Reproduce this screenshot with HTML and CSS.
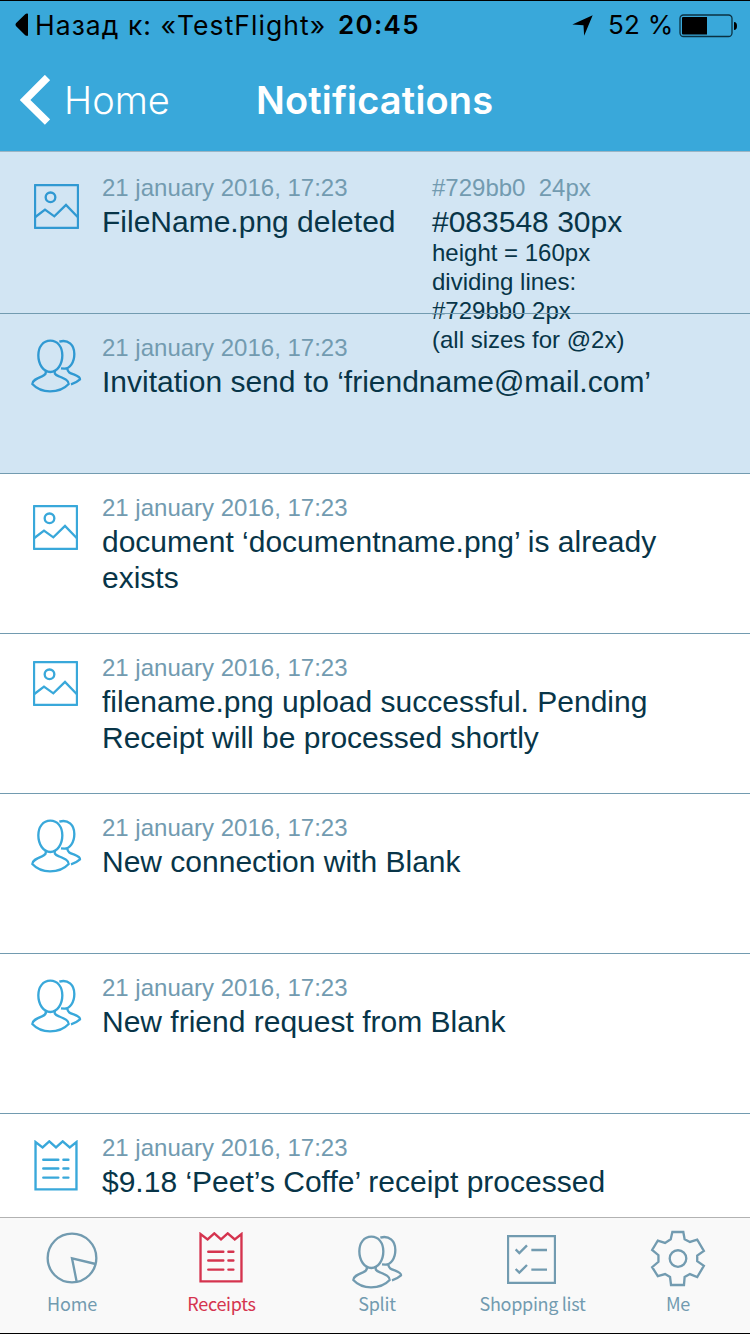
FILE: index.html
```html
<!DOCTYPE html>
<html lang="en">
<head>
<meta charset="utf-8">
<title>Notifications</title>
<link rel="stylesheet" href="styles.css">
</head>
<body>
<svg class="defs" width="0" height="0">
  <symbol id="image" viewBox="42 42 135 135"><rect x="45" y="45" width="129" height="129" rx="1"/><circle cx="91.500" cy="82" r="14.500"/><path d="M46 141L75 119L103 139L138 105L173 141"/></symbol>
  <symbol id="people" viewBox="30 40 156 165"><path d="M91 48C69 48 55 67 55 92C55 119 70 142 91 142C112 142 127 119 127 92C127 67 113 48 91 48Z"/><path d="M77 138Q81 149 66 155C48 162 37 167 37 178C48 190 67 200 90 200C113 200 135 190 146 178C146 167 136 163 117 155C102 149 103 145 105 138"/><path d="M118 51C144 43 163 61 163 88C163 114 149 132 133 132L123 131M142 132C143 144 151 146 163 150C173 154 181 158 180 164Q169 174 153 179"/></symbol>
  <symbol id="receipt" viewBox="42 45 130 152"><path d="M46 51L46 192L168 192L168 51L148 67L127 49L107 67L87 49L67 67Z"/><path stroke-linecap="round" d="M69 104H114M129 104H144M69 130H114M129 130H144M69 157H114M129 157H144"/></symbol>
</svg>
<div class="screen">
  <header class="header">
    <div class="status">
      <svg class="back-tri" viewBox="0 0 14 26"><path d="M14 1V24.500Q12.500 25 11 24L1 14Q0 12.500 1 11L11 1.500Q12.500 0 14 1Z"/></svg>
      <span class="status-back">Назад к: «TestFlight»</span>
      <span class="status-time">20:45</span>
      <svg class="location" viewBox="0 0 64 64"><path d="M1 29L63 1L37 63L35 31Z"/></svg>
      <span class="status-pct">52 %</span>
      <svg class="battery" viewBox="0 0 58 24"><rect x="1" y="1" width="52" height="21.500" rx="3.500" class="shell"/><path d="M4 3H28V20.500H4Q3 20.500 3 19.500V4Q3 3 4 3ZM55 8Q58 8 58 12T55 16Z"/></svg>
    </div>
    <div class="nav">
      <svg class="chevron" viewBox="0 0 30 50"><path d="M27.500 2.500L5 25L27.500 47"/></svg>
      <span class="nav-back">Home</span>
      <h1 class="nav-title">Notifications</h1>
    </div>
  </header>
  <main class="list">
    <article class="row unread first">
      <div class="icon"><svg class="image"><use href="#image"/></svg></div>
      <div class="text"><time>21 january 2016, 17:23</time><p>FileName.png deleted</p></div>
      <div class="note"><div class="note-date">#729bb0&nbsp; 24px</div><div class="note-title">#083548 30px</div><div>height = 160px</div><div>dividing lines:</div><div>#729bb0 2px</div><div>(all sizes for @2x)</div></div>
    </article>
    <article class="row unread">
      <div class="icon"><svg class="people"><use href="#people"/></svg></div>
      <div class="text"><time>21 january 2016, 17:23</time><p>Invitation send to ‘friendname@mail.com’</p></div>
    </article>
    <article class="row">
      <div class="icon"><svg class="image low"><use href="#image"/></svg></div>
      <div class="text"><time>21 january 2016, 17:23</time><p>document ‘documentname.png’ is already<br>exists</p></div>
    </article>
    <article class="row">
      <div class="icon"><svg class="image high"><use href="#image"/></svg></div>
      <div class="text"><time>21 january 2016, 17:23</time><p>filename.png upload successful. Pending<br>Receipt will be processed shortly</p></div>
    </article>
    <article class="row">
      <div class="icon"><svg class="people"><use href="#people"/></svg></div>
      <div class="text"><time>21 january 2016, 17:23</time><p>New connection with Blank</p></div>
    </article>
    <article class="row">
      <div class="icon"><svg class="people"><use href="#people"/></svg></div>
      <div class="text"><time>21 january 2016, 17:23</time><p>New friend request from Blank</p></div>
    </article>
    <article class="row">
      <div class="icon"><svg class="receipt"><use href="#receipt"/></svg></div>
      <div class="text"><time>21 january 2016, 17:23</time><p>$9.18 ‘Peet’s Coffe’ receipt processed</p></div>
    </article>
  </main>
  <nav class="tabs">
    <a class="tab"><svg viewBox="0 0 156 156" class="pie"><circle cx="78" cy="78" r="73"/><path d="M149 96L78 79L92 149"/></svg><span>Home</span></a>
    <a class="tab active"><svg class="receipt"><use href="#receipt"/></svg><span>Receipts</span></a>
    <a class="tab"><svg class="people"><use href="#people"/></svg><span>Split</span></a>
    <a class="tab shopping"><svg class="checklist" viewBox="0 0 147 147"><path d="M3 3H144V144H3ZM26 43L37 54L60 31M73 45H120M26 102L37 113L60 90M73 104H120"/></svg><span>Shopping list</span></a>
    <a class="tab"><svg class="gear" viewBox="150 76 168 172"><path d="M217 82H250L254 104L270 112L292 105L312 139L292 153V170L312 184L292 218L270 209L254 218L252 242H213L210 218L195 209L173 215L156 188L175 172V152L156 136L173 108L195 115L212 104Z"/><circle cx="234" cy="162" r="25"/></svg><span>Me</span></a>
  </nav>
</div>
</body>
</html>
```
FILE: styles.css
```css
* { box-sizing: border-box; }
body { margin: 0; background: #fff; font-family: "Liberation Sans", Arial, sans-serif; }
svg { display: block; fill: none; stroke: currentColor; stroke-width: 7; flex: none; }
.defs { position: absolute; }
.screen { width: 750px; height: 1334px; display: flex; flex-direction: column; overflow: hidden; border-bottom: 1px solid #000; }
.header { height: 152px; flex: none; background: #39a8da; border-top: 1px solid #000; border-bottom: 1px solid #9bb5c4; font-family: Inter, sans-serif; }
.status { height: 50px; display: flex; align-items: flex-start; padding: 0 13px 0 15px; color: #000; font-size: 26px; line-height: 48px; white-space: nowrap; }
.status svg { fill: #000; stroke: none; }
.back-tri { width: 13px; height: 26px; margin-top: 11px; }
.status-back { width: 310px; padding-left: 7px; letter-spacing: 1.05px; font-size: 26.5px; }
.status-time { font-weight: 600; letter-spacing: 1.3px; }
.location { width: 21px; height: 21px; margin: 14px 15px 0 auto; }
.status-pct { width: 71px; letter-spacing: .3px; }
.battery { width: 58px; height: 24px; margin-top: 13px; }
.battery .shell { fill: none; stroke: #0b3142; stroke-width: 1.300; }
.nav { height: 100px; display: grid; grid-template-columns: 64px 192px 1fr; color: #fff; line-height: 98px; }
.chevron { width: 30px; height: 50px; margin: 24px 0 0 19.500px; stroke-width: 7.500; }
.nav-back { font-size: 38px; font-weight: 300; }
.nav-title { margin: 0; font-size: 38px; font-weight: 600; letter-spacing: .15px; }
.list { flex: 1; min-height: 0; overflow: hidden; }
.row { position: relative; display: flex; height: 160px; padding-top: 20px; background: #fff; }
.row::after { content: ""; position: absolute; z-index: 2; left: 0; right: 0; bottom: 0; height: 1px; background: #729bb0; }
.unread { background: #d2e5f3; }
.first { height: 162px; padding-top: 22px; }
.icon { width: 102px; flex: none; color: #39a8da; }
.unread .icon { color: #3099d2; }
.image { width: 45px; height: 45px; margin: 10px 0 0 34px; }
.image.low { margin: 11px 0 0 33px; }
.image.high { margin: 7px 0 0 33px; }
.people { width: 52px; height: 55px; }
.row .people { margin: 4px 0 0 30px; }
.receipt { width: 44px; height: 51px; }
.row .receipt { margin: 6px 0 0 34px; }
.text { color: #083548; white-space: nowrap; }
time { display: block; color: #729bb0; font-size: 24px; line-height: 28px; }
p { margin: 2px 0 0; font-size: 30px; line-height: 36px; }
.note { position: absolute; z-index: 1; left: 432px; top: 22px; color: #083548; font-size: 24px; line-height: 29px; white-space: nowrap; }
.note-date { color: #729bb0; line-height: 28px; }
.note-title { margin: 2px 0 -2px; font-size: 30px; line-height: 36px; }
.tabs { height: 116px; flex: none; display: grid; grid-template-columns: 144px 154px 158px 150px 144px; border-top: 1px solid #b2b2b2; background: #f9f9f9; color: #729bb0; font-family: "Noto Sans CJK SC", sans-serif; font-size: 18px; letter-spacing: -.2px; }
.tab { display: grid; grid-template-rows: 72px 28px; justify-items: center; white-space: nowrap; line-height: 27px; }
.shopping span { padding-left: 2px; letter-spacing: -.3px; }
.shopping { padding-left: 1px; }
.active span { padding-left: 1px; letter-spacing: -.3px; }
.active { color: #d5344f; }
.pie { width: 52px; height: 52px; margin-top: 14px; }
.tabs .receipt { margin: 14px 1px 0 0; }
.tabs .people { margin-top: 16px; }
.checklist { width: 49px; height: 49px; margin-top: 17px; }
.gear { width: 56px; height: 57px; margin-top: 12px; }
```
